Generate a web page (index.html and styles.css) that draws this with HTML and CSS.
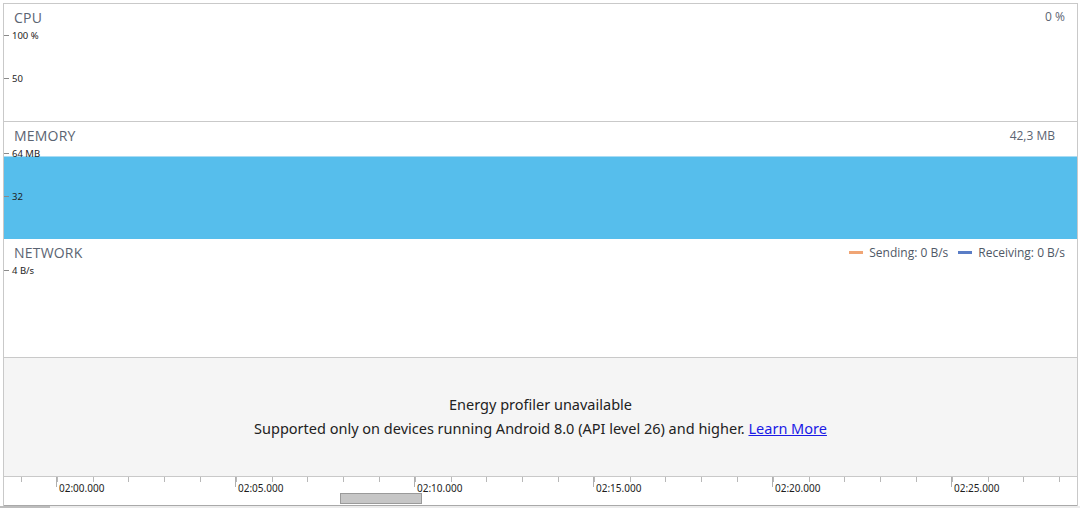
FILE: index.html
```html
<!DOCTYPE html>
<html>
<head>
<meta charset="utf-8">
<link rel="stylesheet" href="styles.css">
</head>
<body>
<div class="frame">
  <section class="panel cpu">
    <div class="head">
      <span class="title">CPU</span>
      <span class="value value-cpu">0 %</span>
    </div>
    <div class="axis">
      <div class="ylabel"><span class="tick"></span>100 %</div>
      <div class="ylabel"><span class="tick"></span>50</div>
    </div>
  </section>
  <section class="panel memory">
    <div class="fill"></div>
    <div class="head">
      <span class="title">MEMORY</span>
      <span class="value value-mem">42,3 MB</span>
    </div>
    <div class="axis">
      <div class="ylabel"><span class="tick"></span>64 MB</div>
      <div class="ylabel"><span class="tick"></span>32</div>
    </div>
  </section>
  <section class="panel network">
    <div class="head">
      <span class="title">NETWORK</span>
      <span class="legend">
        <span class="item"><span class="swatch send"></span>Sending: 0 B/s</span>
        <span class="item"><span class="swatch recv"></span>Receiving: 0 B/s</span>
      </span>
    </div>
    <div class="axis">
      <div class="ylabel"><span class="tick"></span>4 B/s</div>
    </div>
  </section>
  <section class="energy">
    <div class="msg">Energy profiler unavailable</div>
    <div class="msg">Supported only on devices running Android 8.0 (API level 26) and higher. <a href="#" class="link">Learn More</a></div>
  </section>
  <section class="timeline">
    <div class="labels">
      <span class="major">02:00.000</span>
      <span class="major">02:05.000</span>
      <span class="major">02:10.000</span>
      <span class="major">02:15.000</span>
      <span class="major">02:20.000</span>
      <span class="major">02:25.000</span>
    </div>
    <div class="thumb"></div>
  </section>
</div>
<div class="hscroll"></div>
</body>
</html>
```
FILE: styles.css
```css
html, body {
  margin: 0;
  padding: 0;
}
body {
  width: 1080px;
  height: 508px;
  overflow: hidden;
  background: #ffffff;
  font-family: "Open Sans", "Noto Sans", sans-serif;
  position: relative;
}
.frame {
  margin: 3px 0 0 3px;
  width: 1073px;
  border: 1px solid #c9c9c9;
  border-bottom: none;
  background: #ffffff;
}
.panel {
  position: relative;
  height: 117px;
}
.cpu {
  border-bottom: 1px solid #c9c9c9;
}
.network {
  height: 118px;
  border-bottom: 1px solid #c9c9c9;
}
.fill {
  position: absolute;
  left: 0;
  right: 0;
  top: 34px;
  bottom: 0;
  background: #56beec;
  border-top: 1px solid #a9dcf4;
}
.head {
  position: relative;
  display: flex;
  justify-content: space-between;
  align-items: center;
  height: 16px;
  padding: 5px 12px 0 10px;
}
.title {
  font-size: 14px;
  color: #5b6472;
  letter-spacing: 0.2px;
}
.value {
  font-size: 12px;
  color: #5b6472;
}
.value-cpu {
  margin-top: -2px;
}
.value-mem {
  margin-right: 10px;
}
.legend {
  display: flex;
  gap: 10px;
  font-size: 12px;
  color: #4f5866;
}
.item {
  display: flex;
  align-items: center;
  gap: 6px;
}
.swatch {
  width: 14px;
  height: 3px;
  display: inline-block;
}
.swatch.send {
  background: #f0a575;
}
.swatch.recv {
  background: #5a7dc6;
}
.axis {
  position: relative;
  display: flex;
  flex-direction: column;
  gap: 33px;
  margin-top: 5px;
}
.ylabel {
  display: flex;
  align-items: center;
  height: 10px;
  font-family: "Noto Sans", "Open Sans", sans-serif;
  font-size: 9.5px;
  color: #1d1d1d;
}
.tick {
  width: 5px;
  height: 1px;
  background: #8a8a8a;
  margin-right: 3px;
}
.energy {
  box-sizing: border-box;
  height: 119px;
  padding-bottom: 2px;
  background: #f5f5f5;
  border-bottom: 1px solid #c9c9c9;
  display: flex;
  flex-direction: column;
  justify-content: center;
  align-items: center;
  font-family: "Noto Sans", "Open Sans", sans-serif;
  font-size: 14.5px;
  line-height: 24px;
  color: #222222;
}
.link {
  color: #1a1ae6;
  text-decoration: underline;
}
.timeline {
  position: relative;
  height: 28px;
  border-bottom: 1px solid #a9a9a9;
  background-image: repeating-linear-gradient(to right, #b8b8b8 0, #b8b8b8 1px, transparent 1px, transparent 35.8px);
  background-size: 100% 5px;
  background-repeat: no-repeat;
  background-position: 16.8px 0;
  background-color: #ffffff;
  overflow: hidden;
}
.labels {
  display: flex;
  padding-left: 52px;
}
.major {
  box-sizing: border-box;
  width: 179px;
  flex: none;
  padding-left: 3px;
  padding-top: 5px;
  background: linear-gradient(#b0b0b0, #b0b0b0) no-repeat 0 0 / 1px 10px;
  font-family: "Noto Sans", "Open Sans", sans-serif;
  font-size: 10px;
  line-height: 12px;
  color: #1d1d1d;
  white-space: nowrap;
}
.thumb {
  position: absolute;
  left: 336px;
  top: 16px;
  width: 80px;
  height: 9px;
  background: #c6c6c6;
  border: 1px solid #9a9a9a;
}
.hscroll {
  position: absolute;
  left: 0;
  bottom: 0;
  width: 1080px;
  height: 2px;
  background: #ececec;
}
.hscroll::before {
  content: "";
  display: block;
  width: 50px;
  height: 2px;
  background: #bdbdbd;
}
```
